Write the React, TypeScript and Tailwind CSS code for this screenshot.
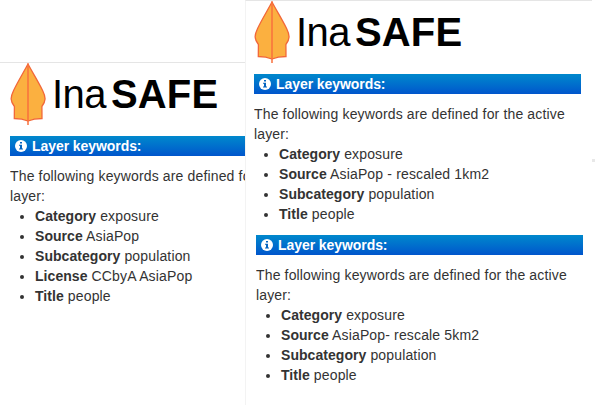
import React from 'react';

type Keyword = [string, string];

function Leaf() {
  return (
    <svg width="36" height="63" viewBox="0 0 36 63" className="block shrink-0">
      <path
        d="M18 1 C22.5 9.5 28.5 19 32.6 27.5 C36 34.5 36 38 31.9 43.5 L32 55.5 C26.5 55.5 22 56.3 18 58 C14 56.3 9.5 55.5 4.3 55.5 L4.4 43.5 C0.2 38 0.2 34.5 3.6 27.5 C7.5 19 13.5 9.5 18 1 Z"
        fill="#fbb040"
        stroke="#f26739"
        strokeWidth="1.3"
      />
      <path d="M18 0.5 V62" stroke="#f8703c" strokeWidth="1.5" />
    </svg>
  );
}

function Logo() {
  return (
    <div className="flex h-[64px] items-start text-[40px] leading-[62px] text-black">
      <Leaf />
      <span className="ml-[6px] w-[59px] tracking-[-0.5px]">Ina</span>
      <span className="font-bold">SAFE</span>
    </div>
  );
}

function InfoIcon() {
  return (
    <svg width="12" height="12" viewBox="0 0 12 12" className="block shrink-0">
      <circle cx="6" cy="6" r="6" fill="#fff" />
      <path d="M5 2h2v1.5H5zM4 4.7h3V8.4h1V9.6H4V8.4h1V5.8H4z" fill="#0464c0" />
    </svg>
  );
}

function Keywords({ items, narrow = false }: { items: Keyword[]; narrow?: boolean }) {
  return (
    <section className={narrow ? 'w-[235px]' : 'w-[327px]'}>
      <h2 className="flex h-5 items-center gap-[5px] bg-linear-to-b from-[#0088cc] to-[#0055cc] pl-[5px] text-[14px] leading-5 font-bold tracking-[-0.07px] text-white">
        <InfoIcon />
        <span>Layer keywords:</span>
      </h2>
      <p className="mt-[10px] overflow-hidden whitespace-nowrap">
        The following keywords are defined for the active
        <br />
        layer:
      </p>
      <ul className="list-disc pl-[25px]">
        {items.map(([name, value]) => (
          <li key={name}>
            <strong className="tracking-[0.05px]">{name}</strong> {value}
          </li>
        ))}
      </ul>
    </section>
  );
}

export default function App() {
  return (
    <main className="flex h-[420px] w-[595px] overflow-hidden bg-white font-['Liberation_Sans',Arial,sans-serif] text-[14px] leading-5 tracking-[0.15px] text-[#333333]">
      <div className="w-[245px] shrink-0 overflow-hidden pt-[62px]">
        <div className="border-t border-[#e5e5e5] pl-[10px]">
          <div className="h-[73px]">
            <Logo />
          </div>
          <Keywords
            narrow
            items={[
              ['Category', 'exposure'],
              ['Source', 'AsiaPop'],
              ['Subcategory', 'population'],
              ['License', 'CCbyA AsiaPop'],
              ['Title', 'people'],
            ]}
          />
        </div>
      </div>
      <div className="h-[405px] w-[347px] shrink-0 border-t border-l border-t-[#e5e5e5] border-l-[#f3f3f3] pl-2">
        <div className="h-[73px]">
          <Logo />
        </div>
        <Keywords
          items={[
            ['Category', 'exposure'],
            ['Source', 'AsiaPop - rescaled 1km2'],
            ['Subcategory', 'population'],
            ['Title', 'people'],
          ]}
        />
        <div className="mt-[11px] ml-[2px]">
          <Keywords
            items={[
              ['Category', 'exposure'],
              ['Source', 'AsiaPop- rescale 5km2'],
              ['Subcategory', 'population'],
              ['Title', 'people'],
            ]}
          />
        </div>
      </div>
      <div className="mt-[159px] h-[3px] w-[3px] bg-[#e8e8e8]" />
    </main>
  );
}
